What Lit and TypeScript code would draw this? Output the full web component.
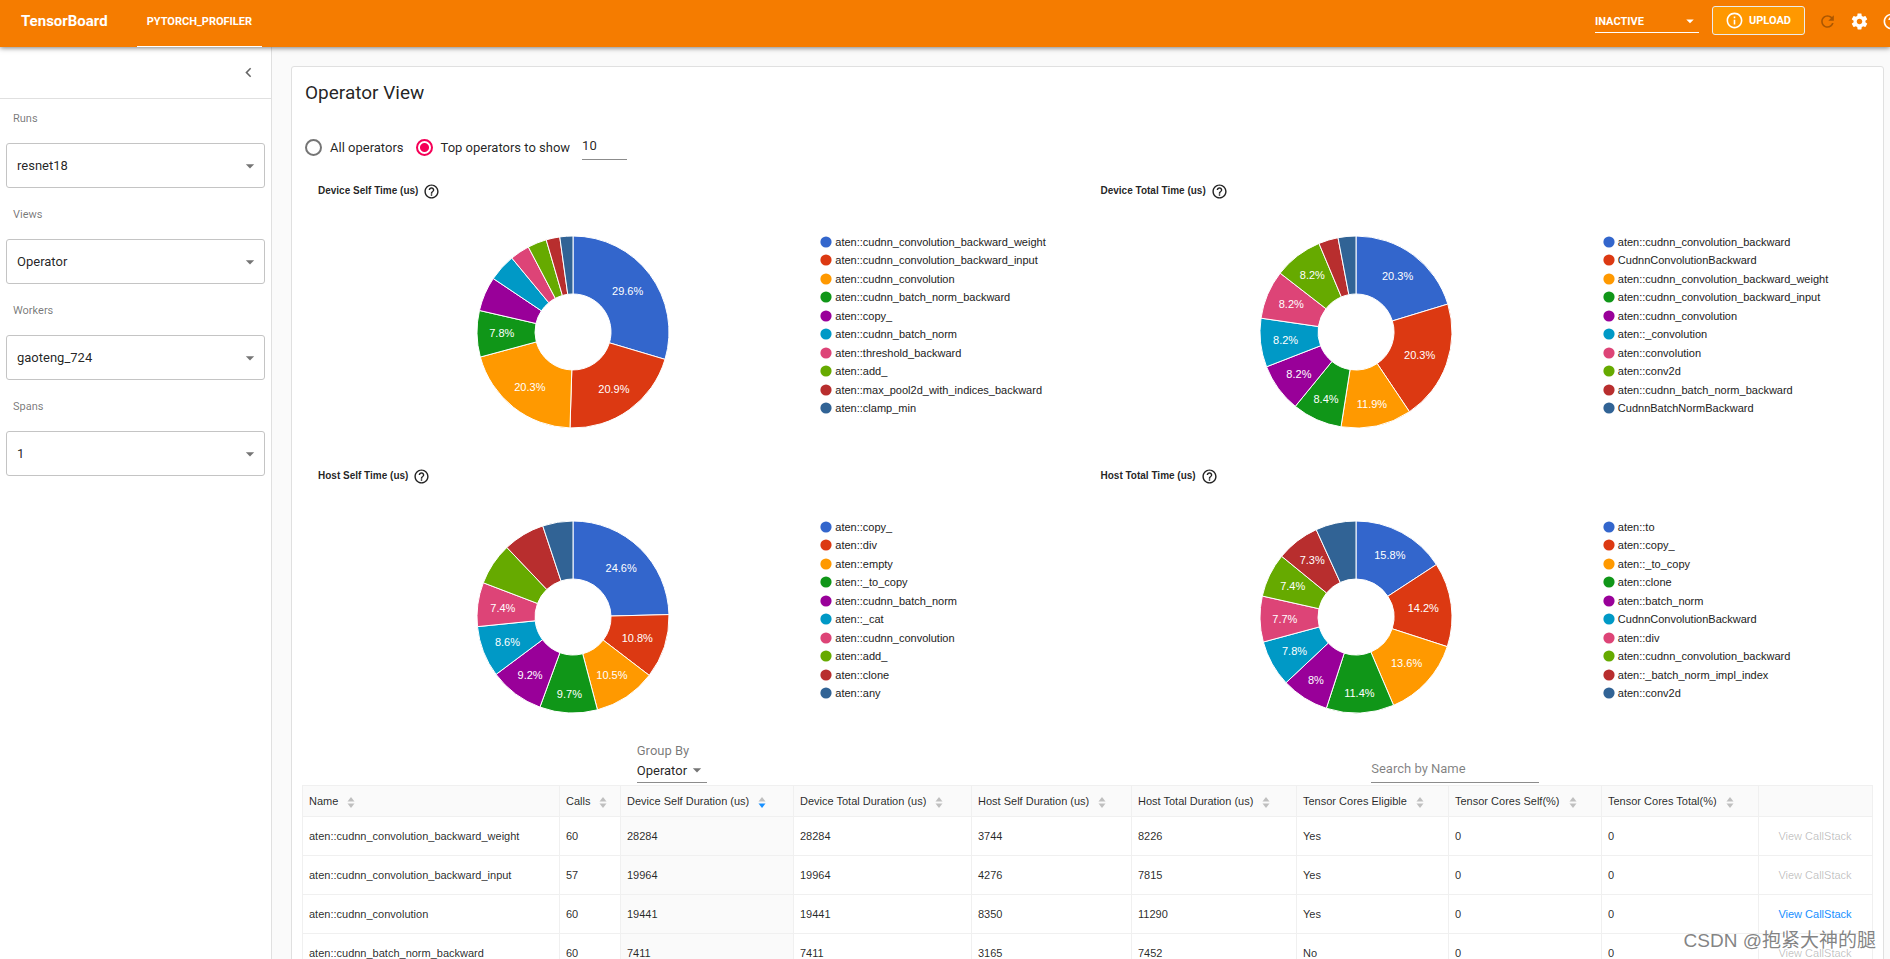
import { LitElement, html, svg, css } from "lit";
import { customElement, property } from "lit/decorators.js";

const PALETTE = [
  "#3366cc", "#dc3912", "#ff9900", "#109618", "#990099",
  "#0099c6", "#dd4477", "#66aa00", "#b82e2e", "#316395",
];

type Slice = [name: string, percent: number];

interface Chart {
  title: string;
  slices: Slice[];
}

const CHARTS: Chart[] = [
  {
    title: "Device Self Time (us)",
    slices: [
      ["aten::cudnn_convolution_backward_weight", 29.6],
      ["aten::cudnn_convolution_backward_input", 20.9],
      ["aten::cudnn_convolution", 20.3],
      ["aten::cudnn_batch_norm_backward", 7.8],
      ["aten::copy_", 5.8],
      ["aten::cudnn_batch_norm", 4.6],
      ["aten::threshold_backward", 3.3],
      ["aten::add_", 3.2],
      ["aten::max_pool2d_with_indices_backward", 2.3],
      ["aten::clamp_min", 2.2],
    ],
  },
  {
    title: "Device Total Time (us)",
    slices: [
      ["aten::cudnn_convolution_backward", 20.3],
      ["CudnnConvolutionBackward", 20.3],
      ["aten::cudnn_convolution_backward_weight", 11.9],
      ["aten::cudnn_convolution_backward_input", 8.4],
      ["aten::cudnn_convolution", 8.2],
      ["aten::_convolution", 8.2],
      ["aten::convolution", 8.2],
      ["aten::conv2d", 8.2],
      ["aten::cudnn_batch_norm_backward", 3.3],
      ["CudnnBatchNormBackward", 3.0],
    ],
  },
  {
    title: "Host Self Time (us)",
    slices: [
      ["aten::copy_", 24.6],
      ["aten::div", 10.8],
      ["aten::empty", 10.5],
      ["aten::_to_copy", 9.7],
      ["aten::cudnn_batch_norm", 9.2],
      ["aten::_cat", 8.6],
      ["aten::cudnn_convolution", 7.4],
      ["aten::add_", 7.1],
      ["aten::clone", 7.0],
      ["aten::any", 5.1],
    ],
  },
  {
    title: "Host Total Time (us)",
    slices: [
      ["aten::to", 15.8],
      ["aten::copy_", 14.2],
      ["aten::_to_copy", 13.6],
      ["aten::clone", 11.4],
      ["aten::batch_norm", 8],
      ["CudnnConvolutionBackward", 7.8],
      ["aten::div", 7.7],
      ["aten::cudnn_convolution_backward", 7.4],
      ["aten::_batch_norm_impl_index", 7.3],
      ["aten::conv2d", 6.8],
    ],
  },
];

const COLUMNS: { label: string; weight: number }[] = [
  { label: "Name", weight: 257 },
  { label: "Calls", weight: 61 },
  { label: "Device Self Duration (us)", weight: 173 },
  { label: "Device Total Duration (us)", weight: 178 },
  { label: "Host Self Duration (us)", weight: 160 },
  { label: "Host Total Duration (us)", weight: 165 },
  { label: "Tensor Cores Eligible", weight: 152 },
  { label: "Tensor Cores Self(%)", weight: 153 },
  { label: "Tensor Cores Total(%)", weight: 157 },
  { label: "", weight: 114 },
];
const TOTAL_WEIGHT = COLUMNS.reduce((sum, c) => sum + c.weight, 0);
const SORTED_COLUMN = 2;

const ROWS: { cells: string[]; hasStack: boolean }[] = [
  { cells: ["aten::cudnn_convolution_backward_weight", "60", "28284", "28284", "3744", "8226", "Yes", "0", "0"], hasStack: false },
  { cells: ["aten::cudnn_convolution_backward_input", "57", "19964", "19964", "4276", "7815", "Yes", "0", "0"], hasStack: false },
  { cells: ["aten::cudnn_convolution", "60", "19441", "19441", "8350", "11290", "Yes", "0", "0"], hasStack: true },
  { cells: ["aten::cudnn_batch_norm_backward", "60", "7411", "7411", "3165", "7452", "No", "0", "0"], hasStack: false },
];

const HELP_PATH =
  "M11 18h2v-2h-2v2zm1-16C6.48 2 2 6.48 2 12s4.48 10 10 10 10-4.48 10-10S17.52 2 12 2zm0 18c-4.41 0-8-3.59-8-8s3.59-8 8-8 8 3.59 8 8-3.59 8-8 8zm0-14c-2.21 0-4 1.79-4 4h2c0-1.1.9-2 2-2s2 .9 2 2c0 2-3 1.75-3 5h2c0-2.25 3-2.5 3-5 0-2.21-1.79-4-4-4z";
const INFO_PATH =
  "M11 7h2v2h-2zm0 4h2v6h-2zm1-9C6.48 2 2 6.48 2 12s4.48 10 10 10 10-4.48 10-10S17.52 2 12 2zm0 18c-4.41 0-8-3.59-8-8s3.59-8 8-8 8 3.59 8 8-3.59 8-8 8z";
const REFRESH_PATH =
  "M17.65 6.35C16.2 4.9 14.21 4 12 4c-4.42 0-7.99 3.58-7.99 8s3.57 8 7.99 8c3.73 0 6.84-2.55 7.73-6h-2.08c-.82 2.33-3.04 4-5.65 4-3.31 0-6-2.69-6-6s2.69-6 6-6c1.66 0 3.14.69 4.22 1.78L13 11h7V4l-2.35 2.35z";
const GEAR_PATH =
  "M19.43 12.98c.04-.32.07-.64.07-.98s-.03-.66-.07-.98l2.11-1.65c.19-.15.24-.42.12-.64l-2-3.46c-.12-.22-.39-.3-.61-.22l-2.49 1c-.52-.4-1.08-.73-1.69-.98l-.38-2.65C14.46 2.18 14.25 2 14 2h-4c-.25 0-.46.18-.49.42l-.38 2.65c-.61.25-1.17.59-1.69.98l-2.49-1c-.23-.09-.49 0-.61.22l-2 3.46c-.13.22-.07.49.12.64l2.11 1.65c-.04.32-.07.65-.07.98s.03.66.07.98l-2.11 1.65c-.19.15-.24.42-.12.64l2 3.46c.12.22.39.3.61.22l2.49-1c.52.4 1.08.73 1.69.98l.38 2.65c.03.24.24.42.49.42h4c.25 0 .46-.18.49-.42l.38-2.65c.61-.25 1.17-.59 1.69-.98l2.49 1c.23.09.49 0 .61-.22l2-3.46c.12-.22.07-.49-.12-.64l-2.11-1.65zM12 15.5c-1.93 0-3.5-1.57-3.5-3.5s1.57-3.5 3.5-3.5 3.5 1.57 3.5 3.5-1.57 3.5-3.5 3.5z";
const CARET_PATH = "M7 10l5 5 5-5z";
const CHEVRON_PATH = "M15.41 7.41L14 6l-6 6 6 6 1.41-1.41L10.83 12z";

const icon = (path: string, size: number, name = "icon") => html`
  <svg class=${name} width=${size} height=${size} viewBox="0 0 24 24" aria-hidden="true">
    <path d=${path} fill="currentColor"></path>
  </svg>
`;

/**
 * Distance from the ring's centre at which a label's box, moved along the
 * given angle, has its farthest corner on a circle of radius `limit`.
 */
function labelRadius(label: string, angle: number, limit: number): number {
  const halfWidth = (label.length * 6 + (label.includes(".") ? 1 : 4)) / 2;
  const halfHeight = 5.5;
  const b = halfWidth * Math.abs(Math.sin(angle)) + halfHeight * Math.abs(Math.cos(angle));
  const c = halfWidth ** 2 + halfHeight ** 2 - limit ** 2;
  return -b + Math.sqrt(b * b - c);
}

/** Ring chart with a legend at its right side. */
@customElement("operator-pie")
export class OperatorPie extends LitElement {
  @property({ attribute: false }) chart: Chart = CHARTS[0];

  static styles = css`
    :host {
      display: block;
      height: 285px;
      box-sizing: border-box;
      padding: 11px 13px 0;
      font-family: "Liberation Sans", Arial, sans-serif;
      color: #222;
    }
    .title {
      display: flex;
      align-items: center;
      gap: 5px;
      height: 16px;
      margin: 0;
      font-size: 10px;
      line-height: 16px;
      color: rgba(0, 0, 0, 0.87);
    }
    .body {
      display: grid;
      grid-template-columns: 502fr 254fr;
      align-items: center;
      padding-top: 36px;
    }
    .ring {
      display: block;
      justify-self: center;
      margin-left: 8px;
    }
    .percent {
      fill: #fff;
      font-size: 11px;
      text-anchor: middle;
    }
    .legend {
      display: flex;
      flex-direction: column;
      justify-content: space-between;
      height: 178px;
      margin: 0;
      padding: 0 0 14px;
      box-sizing: border-box;
      height: 192px;
      list-style: none;
      font-size: 11px;
      line-height: 12px;
      white-space: nowrap;
    }
    .entry {
      display: flex;
      align-items: center;
      gap: 3px;
    }
  `;

  private renderSlices() {
    const outer = 96;
    const inner = 38;
    const total = this.chart.slices.reduce((sum, s) => sum + s[1], 0);
    const at = (r: number, a: number) => [r * Math.sin(a), -r * Math.cos(a)];
    let start = 0;
    return this.chart.slices.map(([, percent], i) => {
      const end = start + (percent / total) * 2 * Math.PI;
      const label = `${percent}%`;
      const middle = (start + end) / 2;
      const [x0, y0] = at(outer, start);
      const [x1, y1] = at(outer, end);
      const [x2, y2] = at(inner, end);
      const [x3, y3] = at(inner, start);
      const [tx, ty] = at(labelRadius(label, middle, 84), middle);
      start = end;
      const d = `M${x0} ${y0}A${outer} ${outer} 0 0 1 ${x1} ${y1}L${x2} ${y2}A${inner} ${inner} 0 0 0 ${x3} ${y3}Z`;
      return svg`
        <path d=${d} fill=${PALETTE[i]} stroke="#fff" stroke-width="1"></path>
        ${percent > 7.2 ? svg`<text class="percent" x=${tx} y=${ty + 4}>${label}</text>` : null}
      `;
    });
  }

  render() {
    return html`
      <h3 class="title">${this.chart.title} ${icon(HELP_PATH, 17)}</h3>
      <div class="body">
        <svg class="ring" width="194" height="194" viewBox="-97 -97 194 194" role="img" aria-label=${this.chart.title}>
          ${this.renderSlices()}
        </svg>
        <ul class="legend">
          ${this.chart.slices.map(
            ([name], i) => html`
              <li class="entry">
                <svg width="12" height="12" viewBox="0 0 12 12" aria-hidden="true">
                  <circle cx="6" cy="6" r="5.6" fill=${PALETTE[i]}></circle>
                </svg>
                <span>${name}</span>
              </li>
            `,
          )}
        </ul>
      </div>
    `;
  }
}

@customElement("operator-table")
export class OperatorTable extends LitElement {
  static styles = css`
    :host {
      display: block;
      font-family: "Liberation Sans", Arial, sans-serif;
      font-size: 11px;
      color: rgba(0, 0, 0, 0.85);
    }
    .table {
      width: 100%;
      table-layout: fixed;
      border-collapse: separate;
      border-spacing: 0;
      border-top: 1px solid #f0f0f0;
      border-left: 1px solid #f0f0f0;
    }
    .heading,
    .cell {
      box-sizing: border-box;
      padding: 0 7px 0 6px;
      border-right: 1px solid #f0f0f0;
      border-bottom: 1px solid #f0f0f0;
      text-align: left;
      white-space: nowrap;
    }
    .heading {
      height: 31px;
      background: #fafafa;
      font-weight: normal;
    }
    .cell {
      height: 39px;
    }
    .sorted {
      background: #fafafa;
    }
    .action {
      text-align: center;
    }
    .sort {
      display: flex;
      align-items: center;
      gap: 9px;
      padding: 0;
      border: 0;
      background: none;
      font: inherit;
      color: inherit;
    }
    .arrows {
      padding-top: 2px;
    }
    .link {
      padding: 0;
      border: 0;
      background: none;
      font: inherit;
      color: #1890ff;
      cursor: pointer;
    }
    .link:disabled {
      color: rgba(0, 0, 0, 0.25);
      cursor: default;
    }
  `;

  render() {
    return html`
      <table class="table">
        <colgroup>
          ${COLUMNS.map((c) => html`<col style="width:${(c.weight / TOTAL_WEIGHT) * 100}%" />`)}
        </colgroup>
        <thead>
          <tr>
            ${COLUMNS.map(
              (c, i) => html`
                <th class="heading" scope="col">
                  ${c.label
                    ? html`<button class="sort" type="button">
                        ${c.label}
                        <svg class="arrows" width="8" height="11" viewBox="0 0 8 11" aria-hidden="true">
                          <path d="M4 0L7.5 4.4H0.5z" fill="#bfbfbf"></path>
                          <path d="M4 11L7.5 6.6H0.5z" fill=${i === SORTED_COLUMN ? "#1890ff" : "#bfbfbf"}></path>
                        </svg>
                      </button>`
                    : null}
                </th>
              `,
            )}
          </tr>
        </thead>
        <tbody>
          ${ROWS.map(
            (row) => html`
              <tr>
                ${row.cells.map(
                  (text, i) => html`<td class=${i === SORTED_COLUMN ? "cell sorted" : "cell"}>${text}</td>`,
                )}
                <td class="cell action">
                  <button class="link" type="button" ?disabled=${!row.hasStack}>View CallStack</button>
                </td>
              </tr>
            `,
          )}
        </tbody>
      </table>
    `;
  }
}

@customElement("app-root")
export class AppRoot extends LitElement {
  static styles = css`
    :host {
      display: flex;
      flex-direction: column;
      position: relative;
      height: 100vh;
      overflow: hidden;
      font-family: Roboto, sans-serif;
      font-size: 13px;
      color: rgba(0, 0, 0, 0.87);
      background: #fafafa;
    }
    .select {
      appearance: none;
      width: 100%;
      margin: 0;
      padding: 0;
      border: 0;
      border-radius: 0;
      outline: 0;
      background: none;
      font: inherit;
      color: inherit;
    }
    .picker {
      display: grid;
      grid-template-columns: 1fr;
      align-items: center;
    }
    .picker > .select,
    .picker > .caret {
      grid-area: 1 / 1;
    }
    .caret {
      justify-self: end;
      pointer-events: none;
      color: rgba(0, 0, 0, 0.54);
    }

    /* Top bar */
    .bar {
      display: flex;
      flex: none;
      z-index: 1;
      height: 47px;
      background: #f57c00;
      box-shadow: 0 1px 5px rgba(0, 0, 0, 0.5);
      color: #fff;
      font-size: 11px;
      font-weight: bold;
    }
    .brand {
      margin: 0;
      padding: 0 29px 0 21px;
      font-size: 15px;
      font-weight: bold;
      line-height: 43px;
    }
    .tab {
      box-sizing: border-box;
      padding: 0 10px;
      border-bottom: 1px solid #fff;
      line-height: 43px;
      color: inherit;
      text-decoration: none;
    }
    .tools {
      display: flex;
      align-items: center;
      height: 43px;
      margin-left: auto;
      margin-right: -11px;
    }
    .mode {
      width: 104px;
      height: 22px;
      margin-right: 13px;
      border-bottom: 1px solid #fff;
    }
    .mode .caret {
      color: #fff;
    }
    .upload {
      display: flex;
      align-items: center;
      gap: 5px;
      box-sizing: border-box;
      height: 29px;
      margin-right: 13px;
      padding: 0 13px 0 12px;
      margin-bottom: 2px;
      border: 1px solid #ebebeb;
      border-radius: 3px;
      background: #ff9800;
      font: inherit;
      color: #fff;
    }
    .tool {
      display: flex;
      margin-right: 13px;
      padding: 0;
      border: 0;
      background: none;
      color: #fff;
    }
    .tool:last-child {
      margin-right: 0;
    }
    .tool:disabled {
      color: rgba(0, 0, 0, 0.3);
    }

    /* Side panel */
    .page {
      display: flex;
      flex: 1;
      min-height: 0;
    }
    .side {
      flex: none;
      width: 271px;
      border-right: 1px solid #e0e0e0;
      background: #fff;
    }
    .collapse {
      display: flex;
      align-items: center;
      justify-content: flex-end;
      height: 51px;
      padding-right: 13px;
      border-bottom: 1px solid #e0e0e0;
    }
    .fold {
      display: flex;
      padding: 0;
      border: 0;
      background: none;
      color: rgba(0, 0, 0, 0.6);
    }
    .field {
      padding: 0 6px;
    }
    .label {
      display: block;
      padding: 13px 7px 17px;
      font-size: 11px;
      line-height: 14px;
      color: rgba(0, 0, 0, 0.54);
    }
    .field + .field .label {
      padding-top: 20px;
    }
    .box {
      box-sizing: border-box;
      height: 45px;
      padding: 0 4px 0 10px;
      border: 1px solid #c4c4c4;
      border-radius: 3px;
    }

    /* Content card */
    .main {
      flex: 1;
      min-width: 0;
      padding: 19px 6px 0 19px;
    }
    .card {
      box-sizing: border-box;
      min-height: 100%;
      padding: 0 10px;
      border: 1px solid #e0e0e0;
      border-radius: 3px;
      background: #fff;
    }
    .heading {
      margin: 0;
      padding: 13px 3px 27px;
      font-size: 19px;
      font-weight: normal;
      line-height: 26px;
    }
    .scope {
      display: flex;
      align-items: center;
      height: 28px;
      padding: 0 3px;
      margin: 0 0 11px;
      border: 0;
    }
    .choice {
      display: flex;
      align-items: center;
      gap: 8px;
      margin-right: 12px;
    }
    .radio {
      appearance: none;
      box-sizing: border-box;
      width: 17px;
      height: 17px;
      margin: 0;
      border: 2px solid rgba(0, 0, 0, 0.54);
      border-radius: 50%;
    }
    .radio:checked {
      border-color: #f50057;
      background: radial-gradient(circle, #f50057 4px, transparent 5px);
    }
    .count {
      box-sizing: border-box;
      width: 45px;
      height: 26px;
      padding: 0 0 2px;
      border: 0;
      border-bottom: 1px solid #8c8c8c;
      outline: 0;
      background: none;
      font: inherit;
      color: inherit;
    }
    .charts {
      display: grid;
      grid-template-columns: 1fr 1fr;
      padding: 0 3px;
    }
    .filters {
      display: grid;
      grid-template-columns: 1fr 1fr;
      align-items: end;
      justify-items: center;
      height: 38px;
      margin-bottom: 5px;
    }
    .group {
      margin-right: 46px;
      color: rgba(0, 0, 0, 0.54);
    }
    .caption {
      display: block;
      line-height: 18px;
    }
    .by {
      box-sizing: border-box;
      width: 70px;
      height: 23px;
      padding-bottom: 2px;
      border-bottom: 1px solid #8c8c8c;
      color: rgba(0, 0, 0, 0.87);
    }
    .search {
      box-sizing: border-box;
      width: 168px;
      height: 26px;
      margin-right: 50px;
      padding: 0 0 2px;
      border: 0;
      border-bottom: 1px solid #8c8c8c;
      outline: 0;
      background: none;
      font: inherit;
      color: inherit;
    }
    .search::placeholder {
      color: rgba(0, 0, 0, 0.5);
      opacity: 1;
    }
    .watermark {
      position: absolute;
      right: 14px;
      bottom: 4px;
      z-index: 2;
      font: 19px/28px "Liberation Sans", "Noto Sans CJK SC", sans-serif;
      color: rgba(110, 110, 110, 0.85);
      text-shadow: 1px 1px 0 #fff;
      pointer-events: none;
    }
  `;

  private renderField(id: string, label: string, value: string) {
    return html`
      <div class="field">
        <label class="label" for=${id}>${label}</label>
        <div class="picker box">
          <select class="select" id=${id}>
            <option>${value}</option>
          </select>
          ${icon(CARET_PATH, 20, "caret")}
        </div>
      </div>
    `;
  }

  render() {
    return html`
      <header class="bar">
        <h1 class="brand">TensorBoard</h1>
        <a class="tab" href="#pytorch_profiler">PYTORCH_PROFILER</a>
        <div class="tools">
          <div class="picker mode">
            <select class="select" aria-label="Inactive plugins">
              <option>INACTIVE</option>
            </select>
            ${icon(CARET_PATH, 18, "caret")}
          </div>
          <button class="upload" type="button">${icon(INFO_PATH, 19)} UPLOAD</button>
          <button class="tool" type="button" aria-label="Reload" disabled>${icon(REFRESH_PATH, 19)}</button>
          <button class="tool" type="button" aria-label="Settings">${icon(GEAR_PATH, 19)}</button>
          <button class="tool" type="button" aria-label="Help">${icon(HELP_PATH, 19)}</button>
        </div>
      </header>
      <div class="page">
        <aside class="side">
          <div class="collapse">
            <button class="fold" type="button" aria-label="Collapse panel">${icon(CHEVRON_PATH, 19)}</button>
          </div>
          ${this.renderField("runs", "Runs", "resnet18")}
          ${this.renderField("views", "Views", "Operator")}
          ${this.renderField("workers", "Workers", "gaoteng_724")}
          ${this.renderField("spans", "Spans", "1")}
        </aside>
        <main class="main">
          <section class="card">
            <h2 class="heading">Operator View</h2>
            <fieldset class="scope" aria-label="Operators to show">
              <label class="choice">
                <input class="radio" type="radio" name="scope" />
                All operators
              </label>
              <label class="choice">
                <input class="radio" type="radio" name="scope" checked />
                Top operators to show
              </label>
              <input class="count" type="text" inputmode="numeric" aria-label="Number of operators" value="10" />
            </fieldset>
            <div class="charts">
              ${CHARTS.map((chart) => html`<operator-pie .chart=${chart}></operator-pie>`)}
            </div>
            <div class="filters">
              <div class="group">
                <label class="caption" for="group-by">Group By</label>
                <div class="picker by">
                  <select class="select" id="group-by">
                    <option>Operator</option>
                  </select>
                  ${icon(CARET_PATH, 20, "caret")}
                </div>
              </div>
              <input class="search" type="search" placeholder="Search by Name" aria-label="Search by Name" />
            </div>
            <operator-table></operator-table>
          </section>
        </main>
      </div>
      <div class="watermark">CSDN @抱紧大神的腿</div>
    `;
  }
}
